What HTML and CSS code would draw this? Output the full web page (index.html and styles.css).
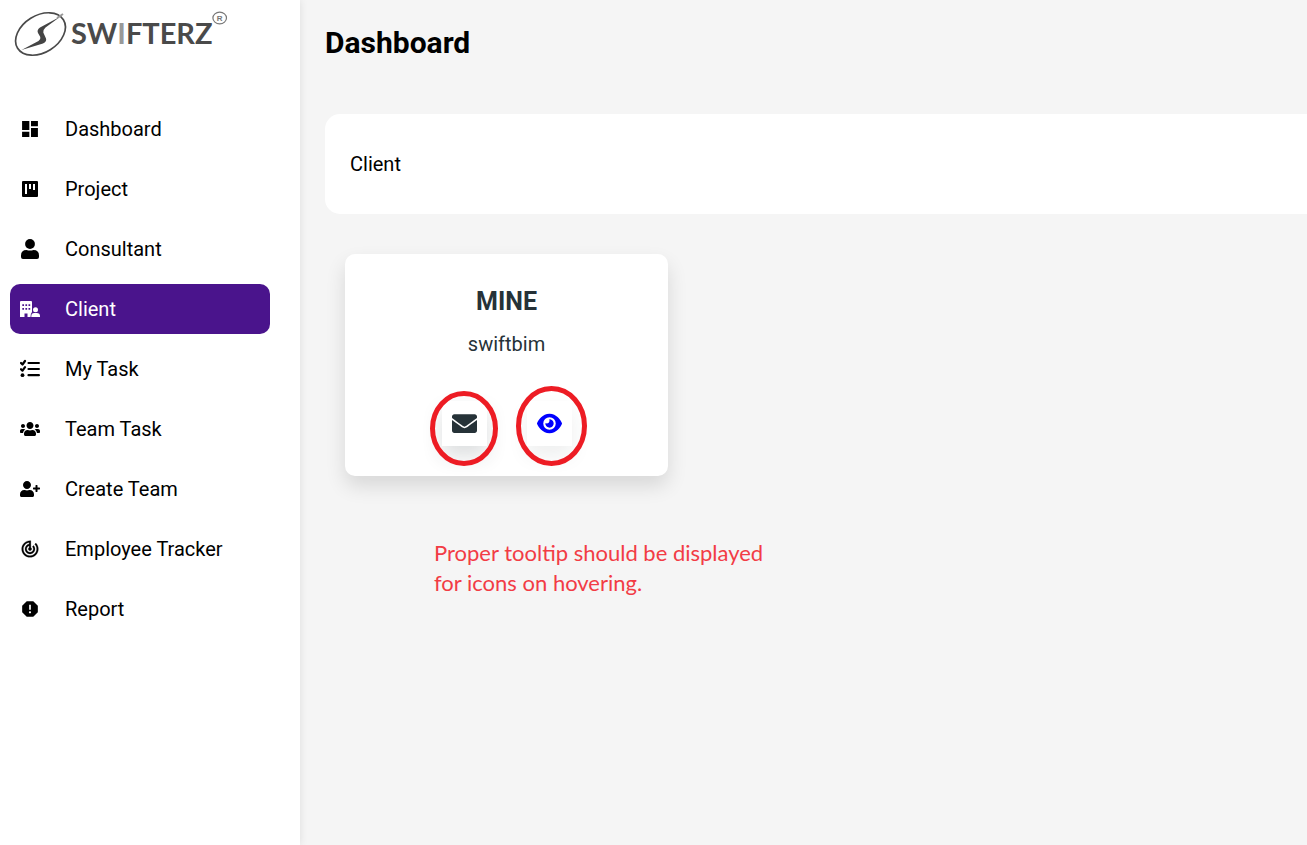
FILE: index.html
```html
<!DOCTYPE html>
<html lang="en">
<head>
<meta charset="utf-8">
<title>Dashboard</title>
<meta name="viewport" content="width=device-width, initial-scale=1">
<link rel="stylesheet" href="styles.css">
</head>
<body>
<div class="layout">
  <aside class="sidebar">
    <a class="logo" href="#" aria-label="Swifterz">
      <svg width="230" height="60" viewBox="0 0 230 60">
        <ellipse cx="40.500" cy="34" rx="27" ry="18.500" transform="rotate(-32 40.500 34)" fill="none" stroke="#4a4a4a" stroke-width="1.700"/>
        <path d="M60.500 16.500 40 27.500Q36.500 30 38 33L40.300 37Q41 39.500 38.500 41L21.500 50 43 43.500Q47 41.500 46 38.500L43.300 32.500Q42.800 30 45.500 27.500Z" fill="#444"/>
        <path d="M57 18 63 14" stroke="#999" stroke-width="2"/>
        <text class="logo-text" x="71" y="43.500">SW<tspan class="logo-pale">I</tspan>FTERZ</text>
        <ellipse cx="219.700" cy="18" rx="6.800" ry="5.800" fill="#fff" stroke="#777" stroke-width="1.200"/>
        <text class="logo-mark" x="219.700" y="21" text-anchor="middle">R</text>
      </svg>
    </a>
    <nav class="nav" aria-label="Main">
      <a class="nav-item" href="#"><svg class="icon" viewBox="0 0 24 24"><path d="M2.500 13.200h8.700V2.500H2.500v10.700zm0 8.300h8.700v-6.300H2.500v6.300zm10.700 0h8.300V10.800h-8.300v10.700zm0-19v6.300h8.300V2.500h-8.300z"/></svg>Dashboard</a>
      <a class="nav-item" href="#"><svg class="icon" viewBox="0 0 20 20"><path fill-rule="evenodd" d="M2.700 2h14.600l.7.700v14.600l-.7.700H2.700l-.7-.7V2.700zM5 5v10h2V5zm4 0v5h2V5zm4 0v6h2V5z"/></svg>Project</a>
      <a class="nav-item" href="#"><svg class="icon" viewBox="0 0 20 20"><circle cx="10" cy="5" r="4.900"/><path d="M1 20v-3.500Q1 11 6.500 11q3.500 1.200 7 0Q19 11 19 16.500V18q0 2-2 2H3q-2 0-2-2z"/></svg>Consultant</a>
      <a class="nav-item nav-item-active" href="#" aria-current="page"><svg class="icon" viewBox="0 0 20 20"><path fill-rule="evenodd" d="M0 3Q0 2 1 2h10q1 0 1 1v10Q10.500 14.500 10.500 18H7.500v-3.500h-3V18H0zM2.300 5.200v1.700H4V5.200zm3.100 0v1.700h1.700V5.200zm3.100 0v1.700h1.700V5.200zM2.300 9v1.700H4V9zm3.100 0v1.700h1.700V9zm3.100 0v1.700h1.700V9z"/><circle cx="15.500" cy="10.700" r="2.500"/><path d="M11.300 18v-1q0-3 3-3h2.400q3.300 0 3.300 3v1z"/></svg>Client</a>
      <a class="nav-item" href="#"><svg class="icon icon-line" viewBox="0 0 20 20"><path d="M8.500 4h10.400M8.500 10h10.400M8.500 16.200h10.400"/><path d="m1 4 1.500 1.500L5 2M1 10.200l1.500 1.500L5 8.200"/><circle class="dot" cx="2.500" cy="16.200" r="1.900"/></svg>My Task</a>
      <a class="nav-item" href="#"><svg class="icon" viewBox="0 0 640 512"><path d="M96 224c35.300 0 64-28.700 64-64s-28.700-64-64-64-64 28.700-64 64 28.700 64 64 64zm448 0c35.300 0 64-28.700 64-64s-28.700-64-64-64-64 28.700-64 64 28.700 64 64 64zm32 32h-64c-17.600 0-33.500 7.100-45.100 18.600 40.300 22.100 68.900 62 75.100 109.400h66c17.700 0 32-14.300 32-32v-32c0-35.300-28.700-64-64-64zm-256 0c61.900 0 112-50.100 112-112S381.900 32 320 32 208 82.100 208 144s50.100 112 112 112zm76.800 32h-8.300c-20.800 10-43.900 16-68.500 16s-47.600-6-68.500-16h-8.300C179.600 288 128 339.600 128 403.200V432c0 26.500 21.500 48 48 48h288c26.500 0 48-21.500 48-48v-28.800c0-63.600-51.600-115.200-115.200-115.200zm-223.700-13.400C161.500 263.100 145.600 256 128 256H64c-35.300 0-64 28.700-64 64v32c0 17.700 14.300 32 32 32h65.900c6.300-47.400 34.900-87.300 75.200-109.400z"/></svg>Team Task</a>
      <a class="nav-item" href="#"><svg class="icon" viewBox="0 0 640 512"><path d="M624 208h-64v-64c0-8.800-7.200-16-16-16h-32c-8.800 0-16 7.200-16 16v64h-64c-8.800 0-16 7.200-16 16v32c0 8.800 7.200 16 16 16h64v64c0 8.800 7.200 16 16 16h32c8.800 0 16-7.200 16-16v-64h64c8.800 0 16-7.200 16-16v-32c0-8.800-7.200-16-16-16zm-400 48c70.700 0 128-57.300 128-128S294.700 0 224 0 96 57.300 96 128s57.300 128 128 128zm89.600 32h-16.700c-22.200 10.200-46.900 16-72.900 16s-50.600-5.800-72.900-16h-16.700C60.200 288 0 348.200 0 422.400V464c0 26.500 21.500 48 48 48h352c26.500 0 48-21.500 48-48v-41.600c0-74.200-60.200-134.400-134.400-134.400z"/></svg>Create Team</a>
      <a class="nav-item" href="#"><svg class="icon" viewBox="0 0 24 24"><path d="m19.070 4.930-1.410 1.410C19.100 7.790 20 9.790 20 12c0 4.420-3.580 8-8 8s-8-3.580-8-8c0-4.080 3.050-7.440 7-7.930v2.020C8.160 6.570 6 9.030 6 12c0 3.310 2.690 6 6 6s6-2.690 6-6c0-1.660-.67-3.160-1.760-4.240l-1.410 1.410C15.550 9.900 16 10.900 16 12c0 2.210-1.790 4-4 4s-4-1.790-4-4c0-1.860 1.280-3.410 3-3.860v2.140c-.6.350-1 .98-1 1.720 0 1.100.9 2 2 2s2-.9 2-2c0-.74-.4-1.380-1-1.720V2h-1C6.480 2 2 6.480 2 12s4.480 10 10 10 10-4.480 10-10c0-2.760-1.120-5.260-2.930-7.070z" stroke="currentColor" stroke-width=".3"/></svg>Employee Tracker</a>
      <a class="nav-item" href="#"><svg class="icon" viewBox="0 0 24 24"><path d="M15.900 2.600H8.100L2.600 8.100v7.800l5.500 5.500h7.800l5.500-5.500V8.100l-5.500-5.500zM12 17.300c-.72 0-1.300-.58-1.300-1.300s.58-1.300 1.300-1.300 1.300.58 1.300 1.300-.58 1.300-1.300 1.300zm1-4.300h-2V7h2v6z"/></svg>Report</a>
    </nav>
  </aside>
  <main class="main">
    <h1 class="title">Dashboard</h1>
    <section class="banner"><h2 class="banner-title">Client</h2></section>
    <div class="cards">
      <article class="card">
        <h3 class="card-name">MINE</h3>
        <p class="card-company">swiftbim</p>
        <div class="card-actions">
          <button class="action action-mail" type="button" aria-label="Email">
            <svg width="25" height="25" viewBox="0 0 512 512"><path d="M502.300 190.800c3.900-3.100 9.700-.2 9.700 4.700V400c0 26.500-21.500 48-48 48H48c-26.500 0-48-21.500-48-48V195.600c0-5 5.700-7.800 9.700-4.700 22.400 17.400 52.100 39.500 154.100 113.600 21.100 15.400 56.700 47.800 92.200 47.600 35.700.3 72-32.800 92.300-47.600 102-74.100 131.600-96.300 154-113.700zM256 320c23.200.4 56.600-29.200 73.400-41.400 132.700-96.300 142.800-104.700 173.400-128.700 5.800-4.500 9.200-11.500 9.200-18.900v-19c0-26.500-21.500-48-48-48H48c-26.500 0-48 21.500-48 48v19c0 7.400 3.400 14.300 9.200 18.900 30.600 23.900 40.700 32.400 173.400 128.700 16.800 12.200 50.200 41.800 73.400 41.400z"/></svg>
            <svg class="ring ring-mail" viewBox="0 0 68 75"><ellipse cx="34" cy="37.500" rx="31.500" ry="35"/></svg>
          </button>
          <button class="action action-view" type="button" aria-label="View">
            <svg width="25" height="25" viewBox="0 0 576 512"><path d="M288 32c-80.800 0-145.500 36.800-192.600 80.600C48.600 156 17.300 208 2.500 243.700c-3.300 7.900-3.300 16.700 0 24.600C17.300 304 48.600 356 95.400 399.400 142.500 443.200 207.200 480 288 480s145.500-36.800 192.600-80.600c46.800-43.500 78.100-95.400 93-131.100 3.300-7.900 3.300-16.700 0-24.600-14.900-35.700-46.200-87.700-93-131.100C433.500 68.800 368.800 32 288 32zM144 256a144 144 0 1 1 288 0 144 144 0 1 1-288 0zm144-64c0 35.300-28.700 64-64 64-7.100 0-13.900-1.200-20.300-3.300-5.500-1.800-11.900 1.600-11.700 7.400.3 6.900 1.300 13.800 3.200 20.700 13.700 51.200 66.400 81.600 117.600 67.900s81.600-66.400 67.900-117.600c-11.100-41.500-47.800-69.400-88.600-71.100-5.800-.2-9.200 6.100-7.400 11.700 2.100 6.400 3.300 13.200 3.300 20.300z"/></svg>
            <svg class="ring ring-view" viewBox="0 0 71 80"><ellipse cx="35.500" cy="40" rx="33" ry="37.500"/></svg>
          </button>
        </div>
      </article>
    </div>
    <p class="note">Proper tooltip should be displayed<br>for icons on hovering.</p>
  </main>
</div>
</body>
</html>
```
FILE: styles.css
```css
* { box-sizing: border-box; margin: 0; }
body { font-family: Roboto, sans-serif; font-size: 20px; line-height: 24px; color: #000; background: #f5f5f5; }
.layout { display: flex; min-height: 100vh; }
.sidebar { flex: 0 0 300px; display: flex; flex-direction: column; gap: 44px; background: #fff; box-shadow: 0 0 8px rgba(0, 0, 0, 0.1); }
.logo { display: flex; }
.logo-text { font: 700 29px Lato, sans-serif; fill: #4a4a4a; }
.logo-pale { fill: #999; }
.logo-mark { font: 700 8px "Liberation Sans", sans-serif; fill: #777; }
.nav { display: flex; flex-direction: column; gap: 10px; padding: 0 30px 0 10px; }
.nav-item { display: flex; align-items: center; gap: 25px; height: 50px; padding: 0 10px; border-radius: 10px; color: #000; text-decoration: none; }
.nav-item-active { background: #4a148c; color: #fff; }
.icon { width: 20px; height: 20px; fill: currentColor; }
.icon-line { fill: none; stroke: currentColor; stroke-width: 2.2; stroke-linecap: round; stroke-linejoin: round; }
.icon-line .dot { fill: currentColor; stroke: none; }
.main { flex: 1; min-width: 0; padding: 25px 0 0 25px; }
.title { font-size: 30px; line-height: 36px; font-weight: 700; }
.banner { margin-top: 53px; padding: 38px 25px; background: #fff; border-radius: 15px 0 0 15px; }
.banner-title { font-size: 20px; font-weight: 400; }
.cards { display: flex; padding: 40px 20px 0; }
.card { width: 100%; max-width: 323px; padding: 32px 20px 30px; display: flex; flex-direction: column; align-items: center; background: #fff; border-radius: 10px; color: #263238; box-shadow: 0 10px 20px rgba(0, 0, 0, 0.12); }
.card-name { font-size: 25px; line-height: 32px; font-weight: 700; }
.card-company { margin-top: 14px; }
.card-actions { display: flex; gap: 40px; margin-top: 45px; }
.action { position: relative; display: flex; align-items: center; justify-content: center; width: 45px; height: 45px; padding: 0; border: 0; background: #fff; cursor: pointer; }
.action svg { fill: currentColor; }
.action-mail { color: #263238; box-shadow: 0 10px 20px rgba(38, 50, 56, 0.16); }
.action-view { color: #00f; box-shadow: 0 10px 20px rgba(38, 50, 56, 0.08); }
.action .ring { position: absolute; fill: none; stroke: #ed1c24; stroke-width: 5; pointer-events: none; }
.ring-mail { left: -12px; top: -10px; width: 68px; height: 75px; }
.ring-view { left: -11px; top: -15px; width: 71px; height: 80px; }
.note { margin: 62px 0 0 109px; font-family: Lato, sans-serif; font-size: 22px; line-height: 30px; color: #f23c45; }
```
